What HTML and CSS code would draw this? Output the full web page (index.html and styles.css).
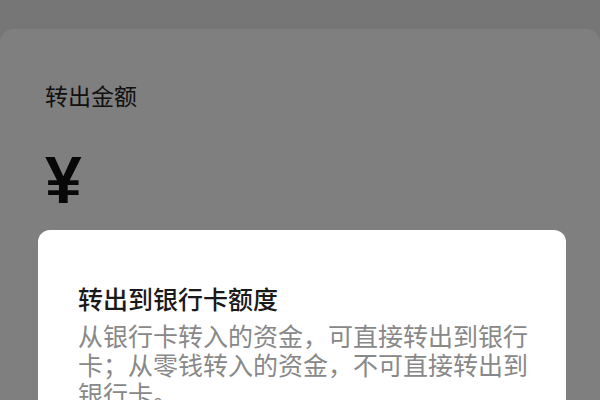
FILE: index.html
```html
<!DOCTYPE html>
<html lang="zh-CN">
<head>
  <meta charset="UTF-8" />
  <meta name="viewport" content="width=device-width, initial-scale=1.0"/>
  <title>转出</title>
  <link rel="stylesheet" href="styles.css">
</head>
<body>

  <div class="sheet">
    <div class="field-label">转出金额</div>
    <div class="amount-row">
      <span class="currency">¥</span>
    </div>
  </div>

  <div class="mask">
    <div class="dialog">
      <div class="dialog-title">转出到银行卡额度</div>
      <div class="dialog-text">从银行卡转入的资金，可直接转出到银行卡；从零钱转入的资金，不可直接转出到银行卡。</div>
    </div>
  </div>

</body>
</html>
```

FILE: styles.css
```css
body {
  margin: 0;
  height: 100vh;
  overflow: hidden;
  background: #ededed;
  font-family: "Noto Sans CJK SC", "Noto Sans", sans-serif;
  color: #222;
}

.sheet {
  margin-top: 29px;
  height: 100%;
  padding: 50px 45px 0;
  background: #fff;
  border-radius: 14px 14px 0 0;
}

.field-label {
  font-size: 23px;
  line-height: 32px;
}

.amount-row {
  margin-top: 36px;
}

.currency {
  font-family: "Liberation Sans", Arial, sans-serif;
  font-weight: bold;
  font-size: 66px;
  line-height: 66px;
  color: #111;
}

/* dimmed backdrop behind the limit dialog */
.mask {
  position: fixed;
  inset: 0;
  background: rgba(0, 0, 0, 0.5);
}

.dialog {
  position: absolute;
  top: 230px;
  left: 38px;
  width: 528px;
  height: 260px;
  box-sizing: border-box;
  padding: 54px 34px 0 40px;
  background: #fff;
  border-radius: 12px;
}

.dialog-title {
  font-size: 25px;
  line-height: 29px;
  font-weight: 500;
  color: #1a1a1a;
  margin-bottom: 8px;
}

.dialog-text {
  font-size: 25px;
  line-height: 29px;
  color: #888;
}
```
